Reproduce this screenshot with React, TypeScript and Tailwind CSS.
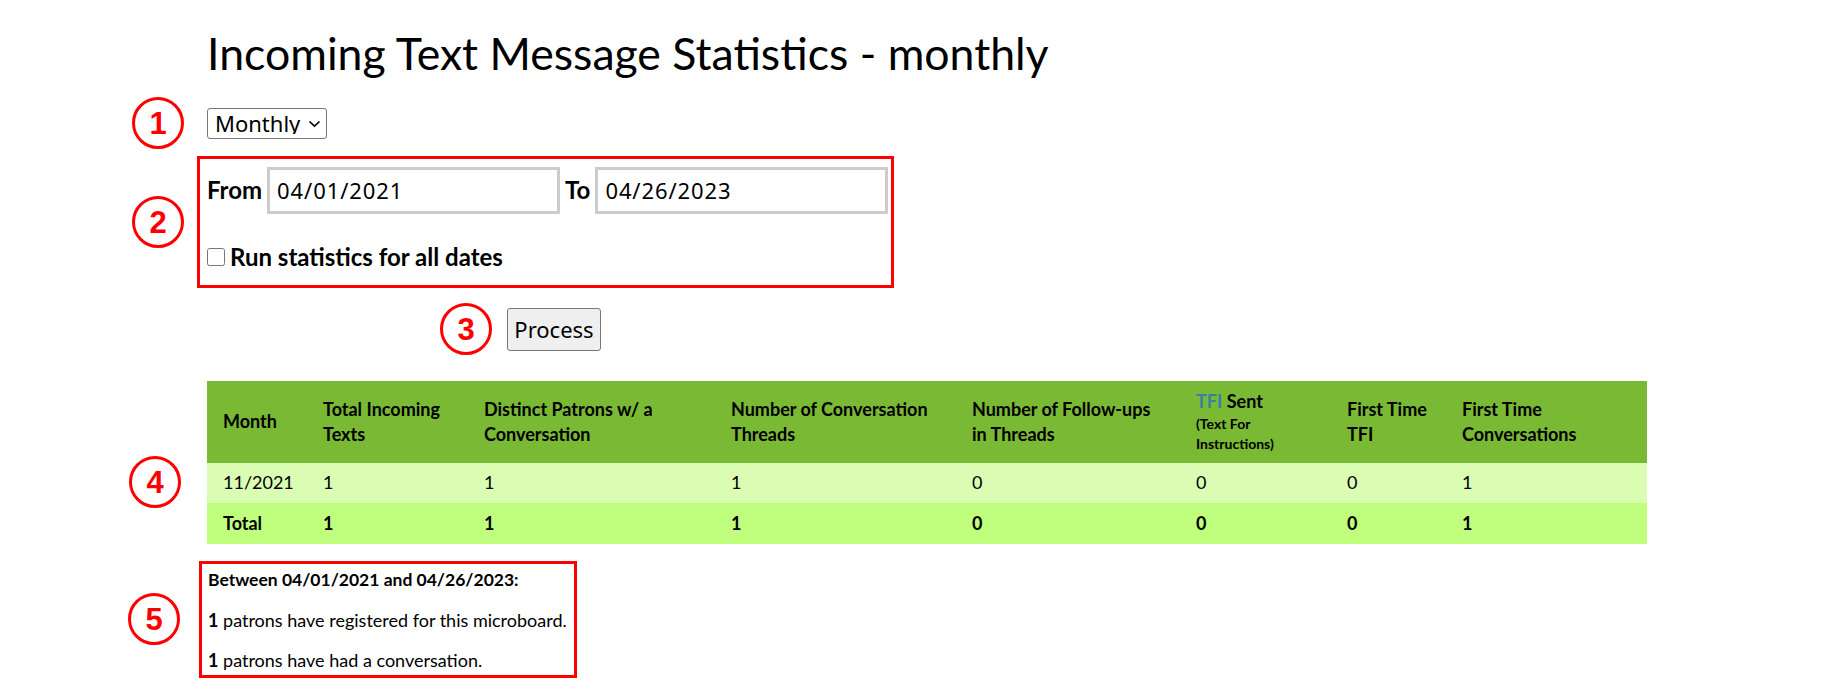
import React from "react";

const circleBase =
  "absolute w-[52px] h-[52px] rounded-full border-[3px] border-[#ff0000] flex items-center justify-center text-[#ff0000] font-bold text-[31px] leading-none font-['Liberation_Sans',Arial,sans-serif]";

const headers: React.ReactNode[] = [
  <>Month</>,
  <>Total Incoming<br />Texts</>,
  <>Distinct Patrons w/ a<br />Conversation</>,
  <>Number of Conversation<br />Threads</>,
  <>Number of Follow-ups<br />in Threads</>,
  <>
    <div>
      <span className="text-[#3b7fa3]">TFI</span> Sent
    </div>
    <div className="text-[14px] leading-[20px]">
      (Text For
      <br />
      Instructions)
    </div>
  </>,
  <>First Time<br />TFI</>,
  <>First Time<br />Conversations</>,
];

const row1 = ["11/2021", "1", "1", "1", "0", "0", "0", "1"];
const row2 = ["Total", "1", "1", "1", "0", "0", "0", "1"];

export default function App() {
  return (
    <div className="relative w-[1821px] h-[692px] bg-white text-black font-['Lato','Noto_Sans',sans-serif] overflow-hidden">
      <div className="pl-[207px] pt-[25px] flex flex-col items-start">
        <h1 className="text-[44.6px] leading-[1.2] font-normal mt-[1px]">
          Incoming Text Message Statistics - monthly
        </h1>

        <div className="relative mt-[28px]">
          <select
            defaultValue="Monthly"
            className="appearance-none w-[120px] h-[31px] border border-[#767676] rounded-[3px] bg-white pl-[7px] text-[22px] leading-none font-['Noto_Sans',sans-serif] text-black outline-none"
          >
            <option>Monthly</option>
            <option>Weekly</option>
            <option>Daily</option>
          </select>
          <svg
            className="absolute left-[101px] top-[12px] pointer-events-none"
            width="13"
            height="8"
            viewBox="0 0 13 8"
          >
            <path d="M1.5 1.5 L6.5 6.2 L11.5 1.5" fill="none" stroke="#000" strokeWidth="1.7" />
          </svg>
        </div>

        <div className="mt-[17px] -ml-[10px] w-[697px] h-[132px] border-[3px] border-[#ff0000] pl-[7px] pt-[8px] flex flex-col">
          <div className="flex items-center">
            <label className="font-bold text-[24px] leading-none">From</label>
            <input
              defaultValue="04/01/2021"
              className="ml-[5px] w-[293px] h-[47px] border-[3px] border-[#cccccc] pl-[7px] text-[22px] tracking-[0.9px] font-['Noto_Sans',sans-serif] outline-none"
            />
            <label className="ml-[5px] font-bold text-[24px] leading-none">To</label>
            <input
              defaultValue="04/26/2023"
              className="ml-[5px] w-[293px] h-[47px] border-[3px] border-[#cccccc] pl-[7px] text-[22px] tracking-[0.9px] font-['Noto_Sans',sans-serif] outline-none"
            />
          </div>
          <div className="mt-[31px] flex items-center">
            <input type="checkbox" className="w-[18px] h-[18px] m-0 accent-black" />
            <span className="ml-[5px] font-bold text-[24px] leading-none">
              Run statistics for all dates
            </span>
          </div>
        </div>

        <button className="mt-[20px] ml-[300px] w-[94px] h-[43px] bg-[#efefef] border border-[#767676] rounded-[3px] text-[22px] font-['Noto_Sans',sans-serif] leading-none">
          Process
        </button>

        <table className="mt-[30px] table-fixed border-collapse w-[1440px] text-[18px]">
          <colgroup>
            <col className="w-[100px]" />
            <col className="w-[161px]" />
            <col className="w-[247px]" />
            <col className="w-[241px]" />
            <col className="w-[224px]" />
            <col className="w-[151px]" />
            <col className="w-[115px]" />
            <col className="w-[201px]" />
          </colgroup>
          <thead>
            <tr className="bg-[#7ab934] h-[82px]">
              {headers.map((h, i) => (
                <th
                  key={i}
                  className="px-[16px] py-[8px] text-left align-middle font-bold leading-[25px] whitespace-nowrap"
                >
                  {h}
                </th>
              ))}
            </tr>
          </thead>
          <tbody>
            <tr className="bg-[#dafdb3] h-[40px]">
              {row1.map((c, i) => (
                <td key={i} className="px-[16px] align-middle font-normal">
                  {c}
                </td>
              ))}
            </tr>
            <tr className="bg-[#bfff7d] h-[41px]">
              {row2.map((c, i) => (
                <td key={i} className="px-[16px] align-middle font-bold">
                  {c}
                </td>
              ))}
            </tr>
          </tbody>
        </table>

        <div className="mt-[17px] -ml-[8px] w-[378px] h-[117px] border-[3px] border-[#ff0000] pl-[6px] pt-[4px] text-[18px] flex flex-col">
          <p className="h-[24px] leading-[24px] font-bold text-[17.5px]">Between 04/01/2021 and 04/26/2023:</p>
          <p className="mt-[16px] h-[24px] leading-[24px]">
            <b>1</b> patrons have registered for this microboard.
          </p>
          <p className="mt-[16px] h-[24px] leading-[24px]">
            <b>1</b> patrons have had a conversation.
          </p>
        </div>
      </div>

      <div className={`${circleBase} left-[132px] top-[97px]`}>1</div>
      <div className={`${circleBase} left-[132px] top-[196px]`}>2</div>
      <div className={`${circleBase} left-[440px] top-[303px]`}>3</div>
      <div className={`${circleBase} left-[129px] top-[456px]`}>4</div>
      <div className={`${circleBase} left-[128px] top-[593px]`}>5</div>
    </div>
  );
}
